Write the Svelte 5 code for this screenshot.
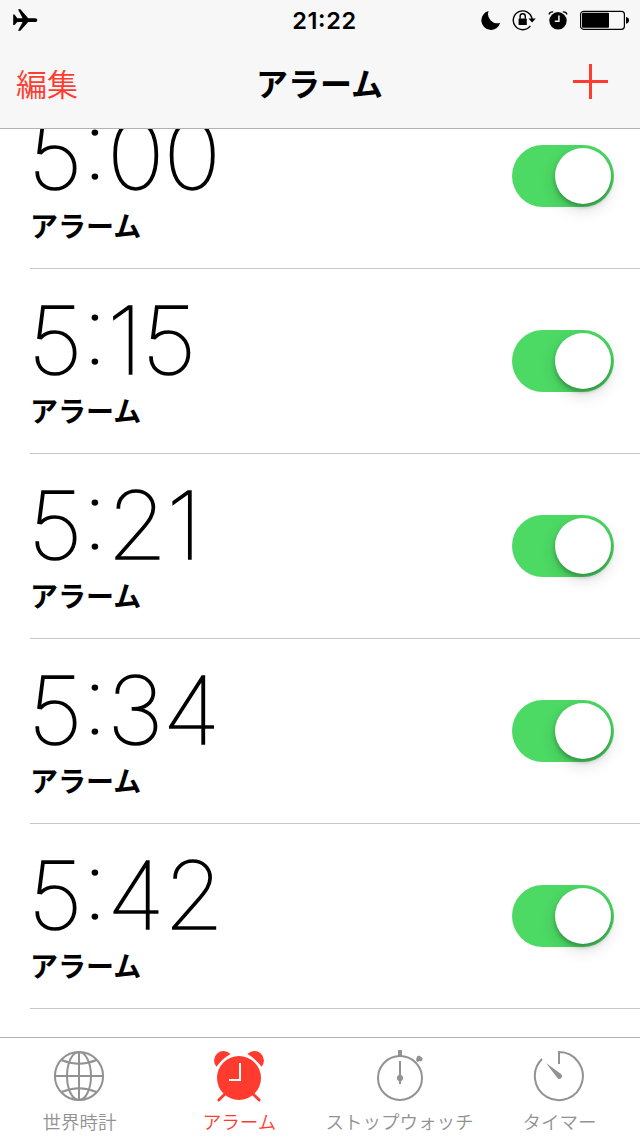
<script lang="ts">
  interface Alarm {
    time: string;
    label: string;
    enabled: boolean;
  }

  let alarms = $state<Alarm[]>([
    { time: '5:00', label: 'アラーム', enabled: true },
    { time: '5:15', label: 'アラーム', enabled: true },
    { time: '5:21', label: 'アラーム', enabled: true },
    { time: '5:34', label: 'アラーム', enabled: true },
    { time: '5:42', label: 'アラーム', enabled: true },
  ]);

  const tabs = [
    { id: 'world', label: '世界時計' },
    { id: 'alarm', label: 'アラーム' },
    { id: 'stopwatch', label: 'ストップウォッチ' },
    { id: 'timer', label: 'タイマー' },
  ];

  let active = $state('alarm');
</script>

<div class="screen">
  <header>
    <div class="status">
      <div class="side">
        <svg class="plane" width="25" height="24" viewBox="0 0 25 24">
          <path d="M0.2 6.6H1.5L4.3 10.2H9.6L5 1.2H7.4L15.2 10.2H22C25 10.2 25 14 22 14H15.2L7.4 22.8H5L9.6 14H4.3L1.5 17H0.2V6.6Z" />
        </svg>
      </div>
      <span class="clock">21:22</span>
      <div class="side right">
        <svg width="20" height="20" viewBox="0 0 20 20">
          <path d="M7.6 1A9.6 9.6 0 1 0 19.2 12.8A9.2 9.2 0 0 1 7.6 1Z" />
        </svg>
        <svg class="lock" width="24" height="22" viewBox="0 0 24 22">
          <path class="line" d="M18.3 16.8A9.4 9.4 0 1 1 20 10" />
          <path d="M16.4 9.6H23.8L20.1 13.4Z" />
          <rect x="6.6" y="9.4" width="8.2" height="6.6" rx="0.6" />
          <path class="line" d="M8.1 9.8V7.4A2.6 2.6 0 0 1 13.3 7.4V9.8" />
        </svg>
        <svg class="bell" width="20" height="20" viewBox="0 0 20 20">
          <circle cx="10" cy="10.8" r="8.7" />
          <path class="line" d="M1.2 4.5Q1.4 1.7 5.2 1.9M14.8 1.9Q18.6 1.7 18.8 4.5" />
          <path class="hands" d="M10.9 5.5V11.3H6.8" />
        </svg>
        <svg class="battery" width="49" height="20" viewBox="0 0 49 20">
          <rect class="case" x="0.6" y="1.3" width="43.8" height="18" rx="3" />
          <rect x="2" y="2.8" width="27" height="15" rx="0.8" />
          <path d="M46 7Q49 7.5 49 10.3T46 13.7Z" />
        </svg>
      </div>
    </div>
    <nav class="bar">
      <button class="edit">編集</button>
      <h1>アラーム</h1>
      <button class="add" aria-label="追加">
        <svg width="35" height="35" viewBox="0 0 35 35">
          <path d="M16 0H19V16H35V19H19V35H16V19H0V16H16Z" />
        </svg>
      </button>
    </nav>
  </header>

  <main>
    <ul>
      {#each alarms as alarm}
        <li>
          <div class="info">
            <span class="time">{alarm.time}</span>
            <span class="label">{alarm.label}</span>
          </div>
          <button
            class="switch"
            class:on={alarm.enabled}
            role="switch"
            aria-checked={alarm.enabled}
            aria-label={alarm.time}
            onclick={() => (alarm.enabled = !alarm.enabled)}
          >
            <span class="knob"></span>
          </button>
        </li>
      {/each}
    </ul>
  </main>

  <footer>
    {#each tabs as tab}
      <button class="tab" class:active={active === tab.id} onclick={() => (active = tab.id)}>
        <svg width="54" height="54" viewBox="0 0 54 54">
          {#if tab.id === 'world'}
            <g class="stroke">
              <circle cx="26" cy="27" r="24.1" />
              <path d="M26 3V51M2 27H50" />
              <ellipse cx="26" cy="27" rx="12" ry="24" />
              <path d="M8.5 11Q26 18.5 43.5 11M8.5 43Q26 35.5 43.5 43" />
            </g>
          {:else if tab.id === 'alarm'}
            <circle cx="26" cy="29" r="22" />
            <path d="M3.5 17.8A9 9 0 0 1 17.6 5.1Q9 10 3.5 17.8ZM48.5 17.8A9 9 0 0 0 34.4 5.1Q43 10 48.5 17.8Z" />
            <path class="legs" d="M12 45L5.8 51M40 45L46.2 51" />
            <path class="face" d="M27 14V31H16" />
          {:else if tab.id === 'stopwatch'}
            <g class="stroke">
              <circle cx="27" cy="29" r="22" />
              <path d="M27 12V35" />
            </g>
            <circle cx="27" cy="29" r="3.1" />
            <rect x="25" y="1" width="4" height="6" />
            <path d="M43.3 9.4L44.2 7.2L46.4 6.4L49.4 9L49.5 11L48 12.6L46.6 12L44.4 13L43.1 11.6Z" />
          {:else}
            <path class="stroke" d="M26 15V3.1A24 24 0 1 1 9 10" />
            <path d="M13 14L28.4 25.2A2.8 2.8 0 0 1 24.4 29.1Z" />
          {/if}
        </svg>
        <span>{tab.label}</span>
      </button>
    {/each}
  </footer>
</div>

<style>
  :global(body) { background: #fff; }
  .screen {
    display: flex;
    flex-direction: column;
    width: 640px;
    height: 1136px;
    overflow: hidden;
    font-family: Inter, 'Noto Sans CJK JP', sans-serif;
    color: #000;
  }
  button { padding: 0; border: 0; background: none; font: inherit; color: inherit; }
  svg { display: block; flex: none; }

  header {
    box-sizing: border-box;
    flex: none;
    height: 129px;
    background: #f7f7f7;
    border-bottom: 1px solid #b2b2b2;
  }
  .status { display: flex; align-items: center; height: 40px; padding: 0 11px 0 13px; }
  .side { display: flex; flex: 1; align-items: center; }
  .right { justify-content: flex-end; }
  .clock {
    padding-left: 7px;
    font-size: 23.5px;
    font-weight: 600;
    letter-spacing: 0.6px;
    font-feature-settings: 'case' 1;
  }
  .lock { margin-left: 11px; }
  .bell { margin-left: 12px; }
  .battery { margin-left: 12px; }
  .line { fill: none; stroke: #000; stroke-width: 1.4; }
  .hands { fill: none; stroke: #f7f7f7; stroke-width: 1.5; }
  .case { fill: none; stroke: #000; stroke-width: 1.2; }

  .bar {
    display: grid;
    grid-template-columns: 1fr auto 1fr;
    align-items: center;
    height: 83px;
    padding: 0 32px 0 32px;
  }
  .edit {
    justify-self: start;
    margin-left: -16px;
    padding-top: 6px;
    font-size: 31px;
    font-weight: 350;
    line-height: 36px;
    color: #ff3b30;
  }
  h1 { margin: 0 0 0 -1px; padding-top: 7px; font-size: 32px; font-weight: 700; line-height: 40px; }
  .add { justify-self: end; fill: #ff3b30; }

  main { flex: 1; min-height: 0; overflow: hidden; }
  ul { margin: -45px 0 0; padding: 0 0 0 30px; list-style: none; }
  li {
    box-sizing: border-box;
    display: flex;
    align-items: center;
    justify-content: space-between;
    height: 185px;
    padding-right: 26px;
    border-bottom: 1px solid #c8c7cc;
  }
  .info { display: flex; flex-direction: column; padding-top: 2px; }
  .time {
    margin-left: -2px;
    font-size: 93.5px;
    font-weight: 100;
    line-height: 98px;
    letter-spacing: -1px;
    font-feature-settings: 'case' 1;
    -webkit-text-stroke: 1.5px #000;
    transform: scaleX(1.04);
    transform-origin: left;
  }
  .label { padding-top: 2px; font-size: 28px; font-weight: 700; line-height: 43px; }

  .switch {
    display: flex;
    justify-content: flex-start;
    box-sizing: border-box;
    width: 102px;
    height: 62px;
    padding: 3px;
    border-radius: 31px;
    background: #e5e5e5;
  }
  .switch.on { justify-content: flex-end; background: #4cd964; }
  .knob {
    width: 56px;
    height: 56px;
    border-radius: 50%;
    background: #fff;
    box-shadow: 0 6px 16px rgba(0, 0, 0, 0.14), 0 3px 4px rgba(0, 0, 0, 0.25);
  }

  footer {
    box-sizing: border-box;
    display: grid;
    grid-template-columns: repeat(4, 160px);
    flex: none;
    height: 99px;
    border-top: 1px solid #b2b2b2;
  }
  .tab {
    display: flex;
    flex-direction: column;
    align-items: center;
    padding: 11px 1px 0 0;
    font-size: 18.5px;
    font-weight: 350;
    color: #929292;
    fill: currentColor;
  }
  .tab span { line-height: 24px; margin-top: 7px; white-space: nowrap; }
  .active { color: #ff3b30; }
  .stroke { fill: none; stroke: currentColor; stroke-width: 2; }
  .legs { fill: none; stroke: currentColor; stroke-width: 2.8; stroke-linecap: round; }
  .face { fill: none; stroke: #fff; stroke-width: 2; }
</style>
